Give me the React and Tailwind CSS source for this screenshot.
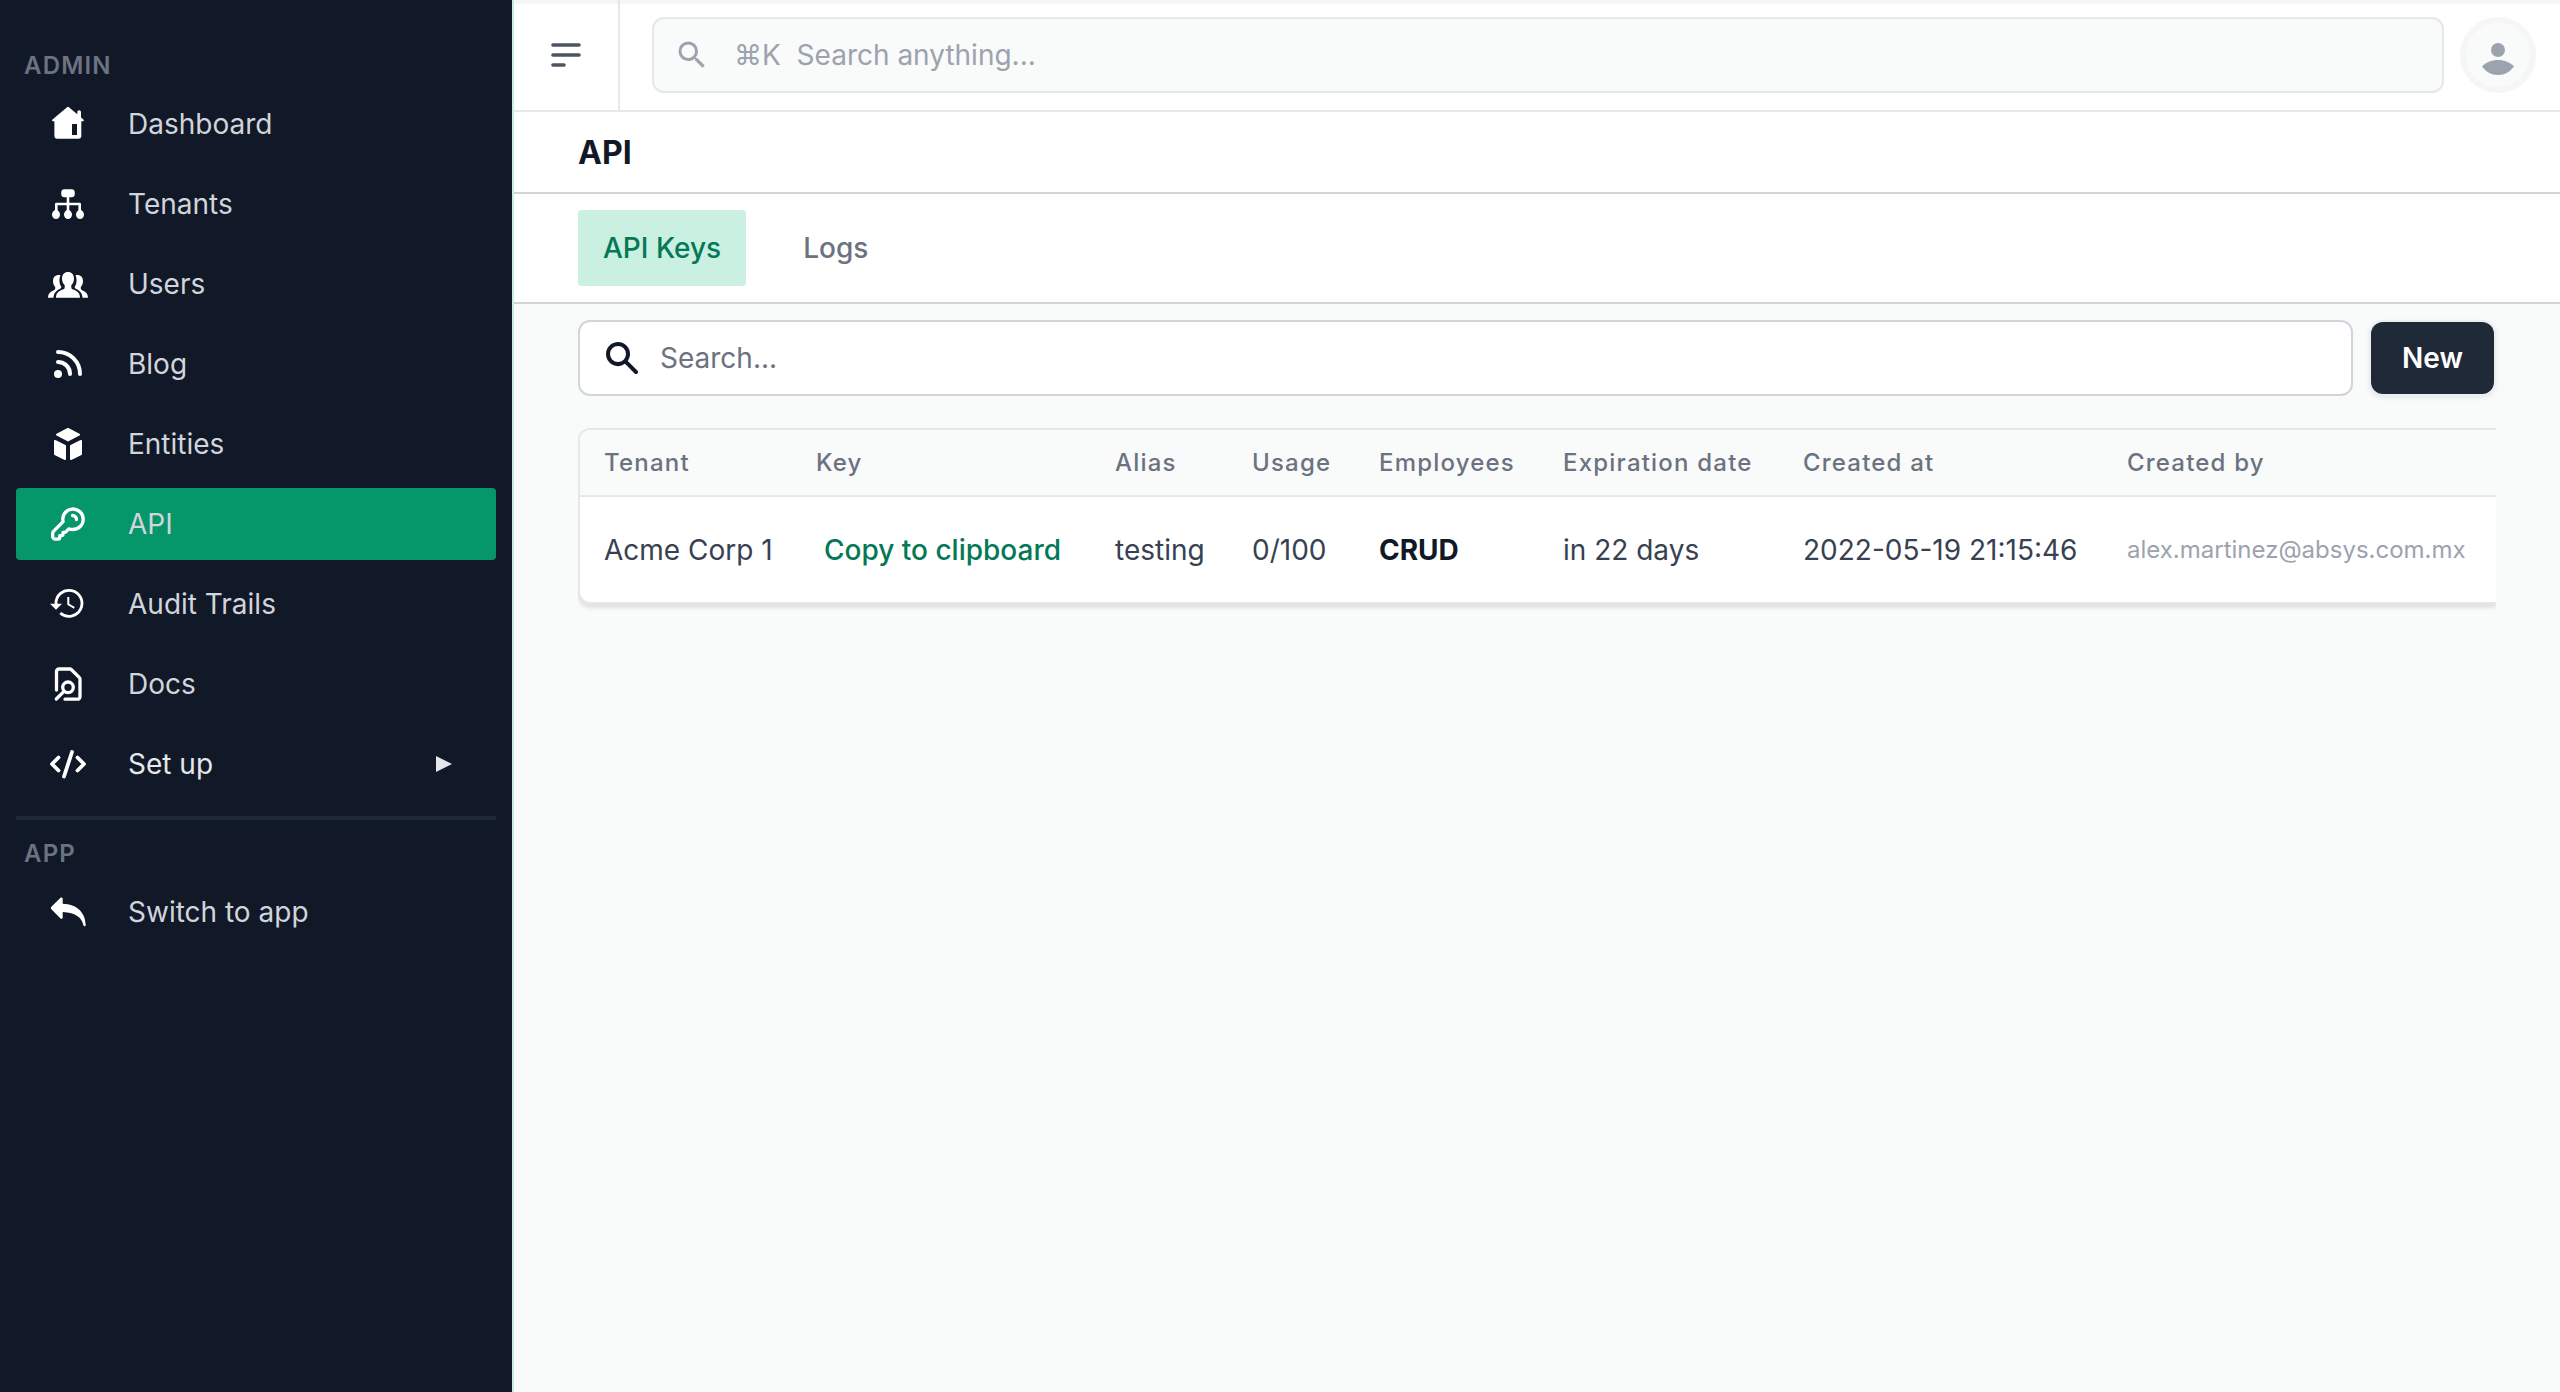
const iconClass = "size-12 shrink-0 text-white";

function HomeIcon() {
  return (
    <svg viewBox="0 0 48 48" className={iconClass} fill="currentColor" aria-hidden="true">
      <path
        fillRule="evenodd"
        d="M22.8 7.4a1.8 1.8 0 0 1 2.4 0l8.1 6.9V12a1.8 1.8 0 0 1 3.7 0v5.4l2.4 2c.8.7.4 1.9-.7 1.9h-1.4v15a2.4 2.4 0 0 1-2.4 2.4H12.800a2.400 2.400 0 0 1-2.400-2.400v-15H9.200c-1.100 0-1.500-1.200-.7-1.900zM28 24v11h5V24z"
      />
    </svg>
  );
}

function TenantsIcon() {
  return (
    <svg viewBox="0 0 48 48" className={iconClass} fill="currentColor" aria-hidden="true">
      <rect x="17.300" y="9.300" width="13.400" height="8" rx="3" />
      <path d="M24 16v16M12.300 32v-8h23.400v8" fill="none" stroke="currentColor" strokeWidth="2.600" strokeLinejoin="round" />
      <ellipse cx="12" cy="34.600" rx="4" ry="4.500" />
      <ellipse cx="24" cy="34.600" rx="4" ry="4.500" />
      <ellipse cx="36" cy="34.600" rx="4" ry="4.500" />
    </svg>
  );
}

function UsersIcon() {
  return (
    <svg viewBox="0 0 48 48" className={iconClass} fill="currentColor" aria-hidden="true">
      <path d="M24 12c3.600 0 6 2.700 6 6.500 0 3-1.200 5.300-2.700 6.700v2.300c0 1 .7 1.600 2 2.100 3.600 1.300 6.700 3.400 6.700 8.100H12c0-4.700 3.100-6.800 6.700-8.100 1.300-.5 2-1.100 2-2.100v-2.300c-1.500-1.400-2.700-3.700-2.700-6.700 0-3.800 2.400-6.500 6-6.500z" />
      <path d="M16.500 15.200c-4.700-.8-7.500 1.600-7.500 5.800 0 2.500.9 4.600 2.200 5.900v1.500c0 .9-.6 1.400-1.700 2C6.500 31.700 4 33.500 4 37.700h5.500c.3-4.500 2.600-7 6.700-8.900.9-.4 1.200-1 1.100-1.700C15 23.500 14.800 18.500 16.500 15.200z" />
      <path d="M31.500 15.200c4.700-.8 7.500 1.600 7.500 5.800 0 2.500-.9 4.600-2.200 5.900v1.500c0 .9.600 1.400 1.700 2 3 1.300 5.500 3.100 5.500 7.300h-5.500c-.3-4.500-2.600-7-6.700-8.900-.9-.4-1.200-1-1.100-1.700 2.300-3.600 2.500-8.600.8-11.900z" />
    </svg>
  );
}

function BlogIcon() {
  return (
    <svg viewBox="0 0 48 48" className={iconClass} fill="none" stroke="currentColor" strokeWidth="4" strokeLinecap="round" aria-hidden="true">
      <circle cx="14" cy="34" r="4" fill="currentColor" stroke="none" />
      <path d="M14 12c12.200 0 22 9.800 22 22M14 22c6.700 0 12 5.300 12 12" />
    </svg>
  );
}

function EntitiesIcon() {
  return (
    <svg viewBox="0 0 48 48" className={iconClass} fill="currentColor" stroke="currentColor" strokeWidth="2" strokeLinejoin="round" aria-hidden="true">
      <path d="M24 9l11 5.700-11 5.700-11-5.700z" />
      <path d="M11 21l10 5v13l-10-5z" />
      <path d="M37 21l-10 5v13l10-5z" />
    </svg>
  );
}

function KeyIcon() {
  return (
    <svg viewBox="0 0 48 48" className={iconClass} fill="none" stroke="currentColor" strokeWidth="3.300" strokeLinecap="round" strokeLinejoin="round" aria-hidden="true">
      <path d="M29 9c-5.700 0-10.200 4.500-10.200 10.200 0 .9.100 1.700.3 2.500L9.700 31.100a3.300 3.300 0 0 0-1 2.400v3c0 1.500 1.200 2.700 2.700 2.700h2.700c1 0 1.600-.7 1.600-1.600v-2h1.700c.9 0 1.600-.7 1.600-1.600v-1.700h1.600c.5 0 .9-.2 1.200-.5l2.900-2.900c1.400.5 2.800.6 4.300.6 5.700 0 10.200-4.500 10.200-10.200S34.700 9 29 9z" />
      <path d="M28.500 15.500c2.200 0 4 1.800 4 4" />
    </svg>
  );
}

function HistoryIcon() {
  return (
    <svg viewBox="0 0 48 48" className={iconClass} fill="none" stroke="currentColor" strokeWidth="2.800" aria-hidden="true">
      <path d="M12 24a13 13 0 1 1 4.300 9" />
      <path d="M6 23.700h12l-6 6z" fill="currentColor" stroke="none" />
      <path d="M24.300 17v7.300l6 3.500" strokeWidth="2" />
    </svg>
  );
}

function DocsIcon() {
  return (
    <svg viewBox="0 0 48 48" className={iconClass} fill="none" stroke="currentColor" strokeWidth="3.300" strokeLinecap="round" strokeLinejoin="round" aria-hidden="true">
      <path d="M12.500 30V11.500A2.500 2.500 0 0 1 15 9h10.700a2.500 2.500 0 0 1 1.800.7l7.700 7.700a2.500 2.500 0 0 1 .8 1.800v17.500a2.500 2.500 0 0 1-2.500 2.500H21" />
      <circle cx="24" cy="27.300" r="5.300" />
      <path d="M20 31.300l-7.700 7.700" />
    </svg>
  );
}

function CodeIcon() {
  return (
    <svg viewBox="0 0 48 48" className={iconClass} fill="none" stroke="currentColor" strokeWidth="3.800" strokeLinecap="round" strokeLinejoin="round" aria-hidden="true">
      <path d="M14.500 17.500L8 24l6.500 6.500M33.500 17.500L40 24l-6.500 6.500M28 12l-8 24.500" />
    </svg>
  );
}

function ReplyIcon() {
  return (
    <svg viewBox="0 0 48 48" className={iconClass} fill="currentColor" aria-hidden="true">
      <path d="M7.400 18.700L16.500 9.800c.8-.8 2.200-.3 2.200.9v5c14 .4 22.800 8.700 23 21.500 0 1.300-2 1.400-2.300.1C38.100 30 32 24.600 18.700 24v5.500c0 1.200-1.400 1.700-2.200.9l-9.100-9.100a1.800 1.800 0 0 1 0-2.600z" />
    </svg>
  );
}

function NavItem({ Icon, label, active }) {
  return (
    <li>
      <a
        href="#"
        aria-current={active ? "page" : undefined}
        className={
          active
            ? "flex h-18 items-center rounded-sm bg-[#059669] pr-10 pl-7 text-[#d1d5db]"
            : "flex h-18 items-center rounded-sm pr-10 pl-7 text-[#d1d5db]"
        }
      >
        <Icon />
        <span className="ml-9 flex-1">{label}</span>
      </a>
    </li>
  );
}

const adminItems = [
  { label: "Dashboard", Icon: HomeIcon },
  { label: "Tenants", Icon: TenantsIcon },
  { label: "Users", Icon: UsersIcon },
  { label: "Blog", Icon: BlogIcon },
  { label: "Entities", Icon: EntitiesIcon },
  { label: "API", Icon: KeyIcon, active: true },
  { label: "Audit Trails", Icon: HistoryIcon },
  { label: "Docs", Icon: DocsIcon },
];

function SectionTitle({ children }) {
  return <h2 className="px-2 pt-0.5 text-2xl font-semibold tracking-wider text-[#6b7280]">{children}</h2>;
}

function Sidebar() {
  return (
    <aside className="w-[514px] shrink-0 border-r-2 border-[#c7efdf] bg-[#111827] px-4 pt-12">
      <nav aria-label="Main">
        <SectionTitle>ADMIN</SectionTitle>
        <ul className="mt-1.5 flex flex-col gap-2">
          {adminItems.map((item) => (
            <NavItem key={item.label} {...item} />
          ))}
          <li>
            <button type="button" aria-expanded="false" className="flex h-18 w-full items-center pr-11 pl-7 text-left text-[#e5e7eb]">
              <CodeIcon />
              <span className="ml-9 flex-1">Set up</span>
              <svg viewBox="0 0 16 16" className="size-4" fill="currentColor" aria-hidden="true">
                <path d="M0 0l16 8-16 8z" />
              </svg>
            </button>
          </li>
        </ul>
        <hr className="my-4 border-t-4 border-[#1f2937]" />
        <SectionTitle>APP</SectionTitle>
        <ul className="mt-1.5">
          <NavItem label="Switch to app" Icon={ReplyIcon} />
        </ul>
      </nav>
    </aside>
  );
}

function TopBar() {
  return (
    <header className="flex h-28 border-b-2 border-[#e5e7eb] bg-white shadow-[inset_0_4px_0_#f6f6f6]">
      <button type="button" aria-label="Toggle sidebar" className="flex w-[106px] items-center justify-center border-r-2 border-[#e5e7eb] text-[#4b5563]">
        <svg viewBox="0 0 40 40" className="size-10" fill="none" stroke="currentColor" strokeWidth="3.600" strokeLinecap="round" aria-hidden="true">
          <path d="M7 10h26M7 20h26M7 30h11" />
        </svg>
      </button>
      <div className="flex flex-1 items-center gap-4 pr-6 pl-8">
        <div className="flex h-19 flex-1 items-center rounded-xl border-2 border-[#e5e7eb] bg-[#f9fafa] pl-5 text-[#9ca3af]">
          <svg viewBox="0 0 24 24" className="size-9" fill="currentColor" aria-hidden="true">
            <path d="M15.500 14h-.79l-.28-.27A6.471 6.471 0 0 0 16 9.500 6.500 6.500 0 1 0 9.500 16c1.610 0 3.090-.59 4.230-1.570l.27.28v.79l5 4.990L20.490 19l-4.990-5zm-6 0C7.010 14 5 11.990 5 9.500S7.010 5 9.500 5 14 7.010 14 9.500 11.990 14 9.500 14z" />
          </svg>
          <input
            type="text"
            aria-label="Search anything"
            placeholder={"⌘K\u00a0\u00a0Search anything..."}
            className="ml-6 flex-1 bg-transparent outline-none placeholder:text-[#9ca3af]"
          />
        </div>
        <button type="button" aria-label="Account" className="flex size-19 items-center justify-center rounded-full border-6 border-[#f6f6f6] bg-[#f9fafa] text-[#9ca3af]">
          <svg viewBox="0 0 40 40" className="size-10" fill="currentColor" aria-hidden="true">
            <circle cx="20" cy="15" r="7" />
            <path d="M4 31.500c3.700-4 9.300-6.500 16-6.500s12.300 2.500 16 6.500c-3.800 5-9.300 8.500-16 8.500S7.800 36.500 4 31.500z" />
          </svg>
        </button>
      </div>
    </header>
  );
}

const columns = [
  { name: "Tenant", width: "w-[212px]" },
  { name: "Key", width: "w-[299px]" },
  { name: "Alias", width: "w-[137px]" },
  { name: "Usage", width: "w-[127px]" },
  { name: "Employees", width: "w-[184px]" },
  { name: "Expiration date", width: "w-[240px]" },
  { name: "Created at", width: "w-[324px]" },
  { name: "Created by", width: "w-auto" },
];

function KeysTable() {
  return (
    <div className="mt-8 overflow-x-clip">
      <div className="overflow-hidden rounded-l-xl border-2 border-r-0 border-[#e5e7eb] bg-white shadow-[0_4px_4px_rgba(0,0,0,0.1)]">
        <table className="w-full table-fixed text-left whitespace-nowrap text-[#374151]">
          <colgroup>
            {columns.map(({ name, width }) => (
              <col key={name} className={width} />
            ))}
          </colgroup>
          <thead className="bg-[#f9fafa]">
            <tr className="h-[66px] border-b-2 border-[#e5e7eb] text-2xl tracking-wider text-[#6b7280]">
              {columns.map(({ name }) => (
                <th key={name} scope="col" className="pl-6 font-medium">
                  {name}
                </th>
              ))}
            </tr>
          </thead>
          <tbody>
            <tr className="h-[106px]">
              <td className="pl-6">Acme Corp 1</td>
              <td className="pl-6">
                <button type="button" className="px-2 font-medium text-[#047857]">
                  Copy to clipboard
                </button>
              </td>
              <td className="pl-6">testing</td>
              <td className="pl-6">0/100</td>
              <td className="pl-6 font-bold text-[#111827]">CRUD</td>
              <td className="pl-6">in 22 days</td>
              <td className="pl-6">2022-05-19 21:15:46</td>
              <td className="pl-6 text-2xl text-[#9ca3af]">alex.martinez@absys.com.mx</td>
            </tr>
          </tbody>
        </table>
      </div>
    </div>
  );
}

export default function App() {
  return (
    <div className="flex min-h-screen bg-[#f9fafa] font-['Inter','Liberation_Sans',sans-serif] text-[28px] leading-10">
      <Sidebar />
      <div className="min-w-0 flex-1">
        <TopBar />
        <div className="flex h-[82px] items-center border-b-2 border-[#d1d5db] bg-white px-16 pt-0.5">
          <h1 className="text-[32px] font-bold text-[#111827]">API</h1>
        </div>
        <nav aria-label="API sections" className="flex gap-8 border-b-2 border-[#d1d5db] bg-white px-16 py-4 font-medium">
          <a href="#" aria-current="page" className="flex h-19 items-center rounded-sm bg-[#c9f0e0] px-[25px] text-[#047857]">
            API Keys
          </a>
          <a href="#" className="flex h-19 items-center px-[25px] text-[#6b7280]">
            Logs
          </a>
        </nav>
        <main className="px-16 pt-4">
          <div className="flex items-center gap-[18px] pr-0.5">
            <div className="flex h-19 flex-1 items-center rounded-xl border-2 border-[#d1d5db] bg-white pl-[22px] text-[#111827]">
              <svg viewBox="0 0 20 20" className="size-10" fill="currentColor" aria-hidden="true">
                <path fillRule="evenodd" clipRule="evenodd" d="M8 4a4 4 0 100 8 4 4 0 000-8zM2 8a6 6 0 1110.890 3.476l4.817 4.817a1 1 0 01-1.414 1.414l-4.816-4.816A6 6 0 012 8z" />
              </svg>
              <input type="text" aria-label="Search" placeholder="Search..." className="ml-[18px] flex-1 bg-transparent outline-none placeholder:text-[#6b7280]" />
            </div>
            <button type="button" className="h-18 rounded-xl bg-[#1f2937] px-[31px] font-semibold text-white shadow-[0_0_0_2px_#eeeef0,0_2px_4px_2px_#e5e7eb]">
              New
            </button>
          </div>
          <KeysTable />
        </main>
      </div>
    </div>
  );
}
